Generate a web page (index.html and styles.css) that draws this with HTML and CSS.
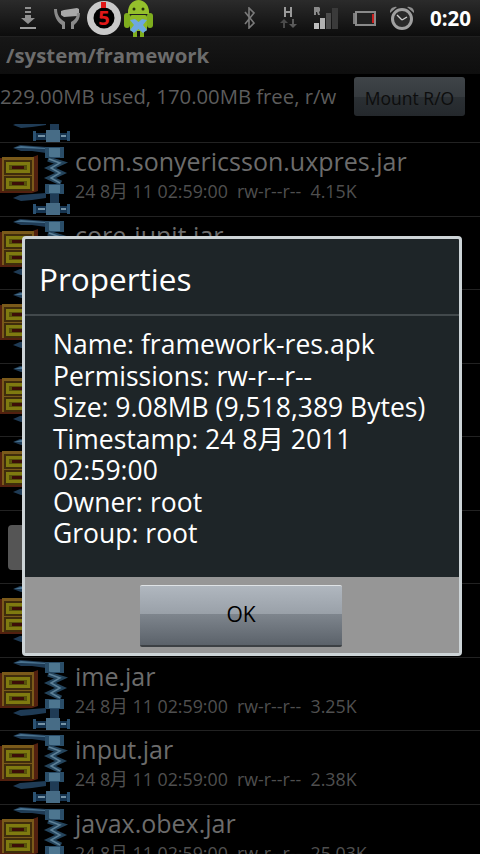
FILE: index.html

```html
<!DOCTYPE html>
<html lang="zh">
<head>
  <meta charset="UTF-8" />
  <meta name="viewport" content="width=device-width, initial-scale=1.0" />
  <title>Properties</title>
  <link rel="stylesheet" href="styles.css">
</head>
<body>
  <svg class="defs" width="0" height="0">
    <symbol id="jar" viewBox="0 0 72 72">
      <path d="M0 15h30l8-3v36l-6 2H0z" fill="#52200f" />
      <rect x="2" y="14" width="32" height="34" fill="#7a5a1a" />
      <rect x="4" y="17" width="28" height="15" fill="#3f2c0c" />
      <rect x="4" y="33" width="28" height="15" fill="#3f2c0c" />
      <rect x="6" y="19" width="24" height="11" fill="#7f7a10" />
      <rect x="6" y="35" width="24" height="11" fill="#7f7a10" />
      <rect x="9" y="22" width="18" height="5" fill="#56520a" />
      <rect x="9" y="38" width="18" height="5" fill="#56520a" />
      <rect x="12" y="23" width="12" height="3" fill="#3c0e08" />
      <rect x="12" y="39" width="12" height="3" fill="#3c0e08" />
      <path d="M13 5 L20 2 L46 4 L46 10 L32 8 L21 8 Z" fill="#1f3b55" />
      <path d="M14 5 L21 3 L46 5 L46 6 L22 5 Z" fill="#4a7390" />
      <rect x="45" y="4" width="19" height="11" fill="#2a4d68" />
      <rect x="49" y="5" width="11" height="9" fill="#4d7690" />
      <path d="M48 16l13 4-11 5 11 5-11 5 11 5" fill="none" stroke="#24445c" stroke-width="5" />
      <path d="M49 16l11 4-9 5 9 5-9 5 9 5" fill="none" stroke="#5d8198" stroke-width="1.500" />
      <rect x="45" y="41" width="19" height="10" fill="#2a4d68" />
      <rect x="49" y="42" width="11" height="8" fill="#4d7690" />
      <path d="M13 55 L20 52 L46 50 L46 55 L32 57 L21 58 Z" fill="#1f3b55" />
      <rect x="50" y="51" width="9" height="10" fill="#1f3b55" />
      <rect x="33" y="63" width="37" height="7" fill="#163450" />
      <rect x="33" y="61" width="3" height="10" fill="#2b5272" />
      <rect x="67" y="61" width="3" height="10" fill="#2b5272" />
      <rect x="46" y="60" width="14" height="12" fill="#476c86" />
      <rect x="38" y="65" width="7" height="2" fill="#7492a6" />
      <rect x="61" y="65" width="5" height="2" fill="#7492a6" />
    </symbol>
  </svg>

  <div class="status">
    <div class="status-left">
      <svg class="ic-down" width="16" height="22" viewBox="0 0 16 22">
        <path d="M5 0h6v2H5zM5 4h6v2H5zM5 8h6v3h4l-7 6-7-6h4z" fill="#8f8f8f" />
        <rect y="20" width="16" height="2" fill="#9c9c9c" />
      </svg>
      <svg class="ic-hands" width="26" height="22" viewBox="0 0 26 22">
        <path d="M7 4l3-1 13-2 2 1v6l-2 1-13 1-3-2z" fill="#a8a8a8" />
        <path d="M0 2h3c0 6 3 10 8 13v7H8v-4C3 15 0 9 0 2zM26 6h-3c0 4-2 7-6 9v7h3v-4c4-3 6-7 6-12z" fill="#8a8a8a" />
      </svg>
      <svg class="ic-timer" width="34" height="34" viewBox="0 0 34 34">
        <circle cx="17" cy="17" r="17" fill="#c9c9c9" />
        <circle cx="17" cy="17" r="10.5" fill="#000" />
        <path d="M14 1h5v6h-5z" fill="#e01818" />
        <text x="17" y="24" text-anchor="middle" class="timer-num">5</text>
      </svg>
      <svg class="ic-droid" width="29" height="37" viewBox="0 0 29 37">
        <rect x="0" y="13" width="6" height="15" rx="3" fill="#7fae1e" />
        <rect x="23" y="13" width="6" height="15" rx="3" fill="#7fae1e" />
        <path d="M4 12a10.500 12 0 0 1 21 0v2H4z" fill="#94c02c" />
        <rect x="6" y="15" width="17" height="16" rx="2" fill="#8cb925" />
        <rect x="9" y="29" width="4" height="8" fill="#7fae1e" />
        <rect x="16" y="29" width="4" height="8" fill="#7fae1e" />
        <circle cx="10" cy="9" r="1.500" fill="#24300a" />
        <circle cx="19" cy="9" r="1.500" fill="#24300a" />
        <path d="M6 20l5-1 3.500 3 3.500-3 5 1-4 5 4 5-4 3-4.500-4-4.500 4-4-3 4-5z" fill="#6ea8e0" />
      </svg>
    </div>
    <div class="status-right">
      <svg class="ic-bt" width="11" height="22" viewBox="0 0 11 22">
        <path d="M1 5l9 11-5 5V1l5 5-9 11" fill="none" stroke="#7a7a7a" stroke-width="1.600" />
      </svg>
      <svg class="ic-h" width="19" height="22" viewBox="0 0 19 22">
        <path d="M5 0h2v4h4V0h2v10h-2V6H7v4H5z" fill="#9a9a9a" />
        <path d="M5 12l4 4H6v5H4v-5H1z" fill="#4a4a4a" />
        <path d="M14 21l-4-4h3v-5h2v5h3z" fill="#5a5a5a" />
      </svg>
      <svg class="ic-sig" width="24" height="22" viewBox="0 0 24 22">
        <path d="M0 0h5l1 1v3l-1 1 1 3H4L3 5H2v3H0z" fill="#8a8a8a" />
        <rect x="0" y="16" width="5" height="6" fill="#bdbdbd" />
        <rect x="6" y="11" width="5" height="11" fill="#b0b0b0" />
        <rect x="12" y="6" width="5" height="16" fill="#4a4a4a" />
        <rect x="18" y="1" width="6" height="21" fill="#3a3a3a" />
      </svg>
      <svg class="ic-bat" width="23" height="15" viewBox="0 0 23 15">
        <rect x="0" y="2" width="3" height="11" fill="#7c7c7c" />
        <rect x="3" y="1" width="19" height="13" fill="#222" stroke="#8a8a8a" stroke-width="2" />
        <rect x="19" y="3" width="2" height="9" fill="#c92020" />
      </svg>
      <svg class="ic-alarm" width="24" height="24" viewBox="0 0 24 24">
        <path d="M0 7a5.500 5.500 0 0 1 7-6zM24 7a5.500 5.500 0 0 0-7-6z" fill="#8f8f8f" />
        <circle cx="12" cy="13" r="9.500" fill="#2a2a2a" stroke="#a0a0a0" stroke-width="3" />
        <path d="M12 14L7 9M12 14l5-3" stroke="#cfcfcf" stroke-width="1.400" fill="none" />
      </svg>
      <span class="clock">0:20</span>
    </div>
  </div>

  <div class="path-bar">/system/framework</div>

  <div class="info-row">
    <span class="usage">229.00MB used, 170.00MB free, r/w</span>
    <button class="mount">Mount R/O</button>
  </div>

  <div class="list">
    <div class="row row-first"><svg class="icon"><use href="#jar" /></svg></div>
    <div class="row">
      <svg class="icon"><use href="#jar" /></svg>
      <div class="file">
        <div class="name">com.sonyericsson.uxpres.jar</div>
        <div class="meta">24 8月 11 02:59:00  rw-r--r--  4.15K</div>
      </div>
    </div>
    <div class="row">
      <svg class="icon"><use href="#jar" /></svg>
      <div class="file">
        <div class="name">core-junit.jar</div>
      </div>
    </div>
    <div class="row"><svg class="icon"><use href="#jar" /></svg></div>
    <div class="row"><svg class="icon"><use href="#jar" /></svg></div>
    <div class="row"><svg class="icon"><use href="#jar" /></svg></div>
    <div class="row"><div class="blank"></div></div>
    <div class="row"><svg class="icon"><use href="#jar" /></svg></div>
    <div class="row">
      <svg class="icon"><use href="#jar" /></svg>
      <div class="file">
        <div class="name">ime.jar</div>
        <div class="meta">24 8月 11 02:59:00  rw-r--r--  3.25K</div>
      </div>
    </div>
    <div class="row">
      <svg class="icon"><use href="#jar" /></svg>
      <div class="file">
        <div class="name">input.jar</div>
        <div class="meta">24 8月 11 02:59:00  rw-r--r--  2.38K</div>
      </div>
    </div>
    <div class="row">
      <svg class="icon"><use href="#jar" /></svg>
      <div class="file">
        <div class="name">javax.obex.jar</div>
        <div class="meta">24 8月 11 02:59:00  rw-r--r--  25.03K</div>
      </div>
    </div>
  </div>

  <div class="dialog">
    <div class="dialog-title">Properties</div>
    <div class="dialog-body">
      <div>Name: framework-res.apk</div>
      <div>Permissions: rw-r--r--</div>
      <div>Size: 9.08MB (9,518,389 Bytes)</div>
      <div>Timestamp: 24 8月 2011 02:59:00</div>
      <div>Owner: root</div>
      <div>Group: root</div>
    </div>
    <div class="dialog-foot">
      <button class="ok">OK</button>
    </div>
  </div>
</body>
</html>
```

FILE: styles.css

```css
html, body {
  height: 100%;
}

body {
  margin: 0;
  width: 480px;
  height: 854px;
  overflow: hidden;
  position: relative;
  background: #000;
  font-family: "Open Sans", "Noto Sans CJK SC", sans-serif;
}

.defs {
  position: absolute;
}

.status {
  height: 36px;
  display: flex;
  justify-content: space-between;
  align-items: center;
  background: linear-gradient(to bottom, #2b2b2b, #0c0c0c);
}

.status-left, .status-right {
  display: flex;
  align-items: center;
}

.status-left svg, .status-right svg {
  display: block;
}

.ic-down { margin-left: 20px; }
.ic-hands { margin-left: 18px; }
.ic-timer { margin-left: 7px; }
.ic-droid { margin-left: 3px; }
.ic-h { margin-left: 24px; }
.ic-sig { margin-left: 16px; }
.ic-bat { margin-left: 15px; }
.ic-alarm { margin-left: 14px; }

.timer-num {
  font-size: 20px;
  font-weight: 700;
  fill: #e01818;
}

.clock {
  margin: 0 9px 0 16px;
  color: #fff;
  font-size: 20.500px;
  font-weight: 700;
}

.path-bar {
  height: 37px;
  line-height: 37px;
  padding-left: 6px;
  border-top: 1px solid #1f1f1f;
  background: linear-gradient(to bottom, #171717, #0e0e0e);
  color: #6c6c6c;
  font-size: 20.400px;
  font-weight: 700;
}

.info-row {
  height: 50px;
  display: flex;
  justify-content: space-between;
  align-items: flex-start;
}

.usage {
  margin-top: 8px;
  color: #5c5c5c;
  font-size: 20.300px;
  white-space: nowrap;
}

.mount {
  width: 111px;
  height: 39px;
  margin: 3px 15px 0 0;
  padding: 2px 0 0;
  border: 0;
  border-radius: 3px;
  background: linear-gradient(to bottom, #3f4448 0, #363b3f 50%, #2b3034 50%, #24282c 100%);
  color: #0d0d0d;
  font-family: inherit;
  font-size: 17.500px;
}

.list {
  height: 730px;
  overflow: hidden;
}

.row {
  height: 73.500px;
  box-sizing: border-box;
  display: flex;
  border-bottom: 1px solid #222;
}

.row-first {
  margin-top: -54.500px;
}

.icon {
  width: 72px;
  height: 72px;
  flex: none;
}

.blank {
  width: 60px;
  height: 45px;
  margin: 14px 0 0 8px;
  border-radius: 4px;
  background: #555;
}

.file {
  margin-left: 3px;
}

.name {
  margin-top: 1px;
  height: 35px;
  line-height: 35px;
  color: #6c6c6c;
  font-size: 25px;
}

.meta {
  height: 24px;
  line-height: 24px;
  color: #4f4f4f;
  font-size: 17.800px;
  white-space: pre;
}

.dialog {
  position: absolute;
  left: 22px;
  top: 236px;
  width: 434px;
  height: 414px;
  border: 3px solid #cdd4d7;
  border-radius: 4px;
  display: flex;
  flex-direction: column;
  background: #1e2528;
}

.dialog-title {
  height: 75px;
  line-height: 79px;
  padding-left: 14px;
  border-bottom: 2px solid #42494c;
  color: #fff;
  font-size: 31.500px;
}

.dialog-body {
  flex: 1;
  padding: 13px 10px 0 28px;
  color: #fff;
  font-size: 26.500px;
  line-height: 31.500px;
}

.dialog-foot {
  height: 76px;
  display: flex;
  justify-content: center;
  padding: 8px 2px 0 0;
  box-sizing: border-box;
  background: #969696;
}

.ok {
  width: 202px;
  height: 62px;
  padding: 0 0 4px;
  border: 0;
  border-top: 1px solid #dfe3e6;
  border-bottom: 2px solid #3c4044;
  border-radius: 2px;
  background: linear-gradient(to bottom, #b0b7bf 0, #99a0a8 48%, #7e858d 48%, #5b626a 100%);
  color: #000;
  font-family: inherit;
  font-size: 21px;
}
```
